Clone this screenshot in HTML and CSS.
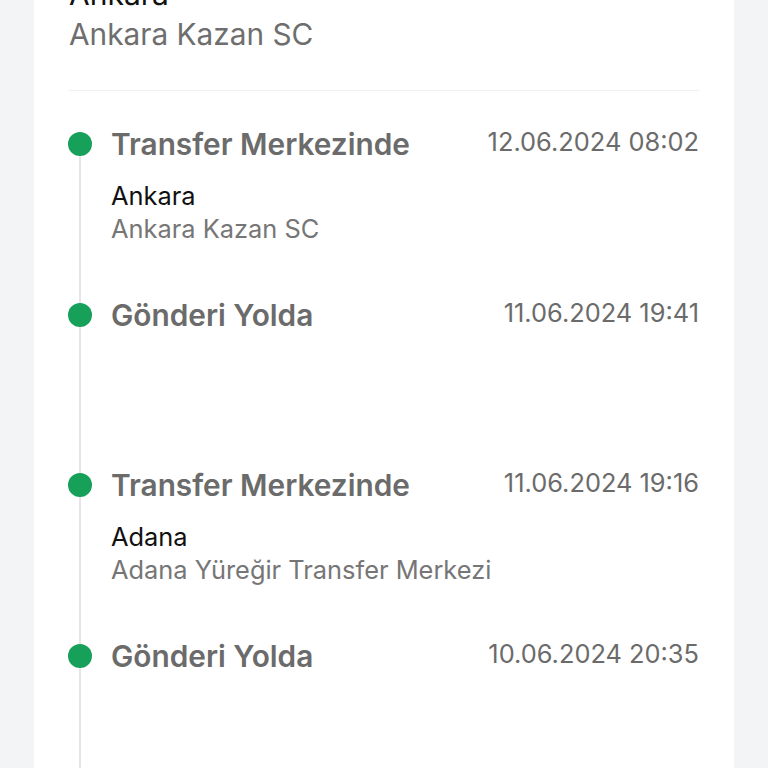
FILE: index.html
```html
<!DOCTYPE html>
<html lang="tr">

<head>
    <meta charset="UTF-8">
    <meta name="viewport" content="width=device-width, initial-scale=1.0">
    <title>Gönderi Takibi</title>
    <link rel="stylesheet" href="styles.css">
</head>

<body>

    <div class="card">
        <div class="location">
            <div class="city">Ankara</div>
            <div class="place">Ankara Kazan SC</div>
        </div>

        <div class="divider"></div>

        <ul class="timeline">
            <li class="step">
                <div class="stepHead">
                    <span class="stepTitle">Transfer Merkezinde</span>
                    <span class="stepDate">12.06.2024 08:02</span>
                </div>
                <div class="stepDetails">
                    <div class="city">Ankara</div>
                    <div class="place">Ankara Kazan SC</div>
                </div>
            </li>
            <li class="step">
                <div class="stepHead">
                    <span class="stepTitle">Gönderi Yolda</span>
                    <span class="stepDate">11.06.2024 19:41</span>
                </div>
                <div class="stepDetails"></div>
            </li>
            <li class="step">
                <div class="stepHead">
                    <span class="stepTitle">Transfer Merkezinde</span>
                    <span class="stepDate">11.06.2024 19:16</span>
                </div>
                <div class="stepDetails">
                    <div class="city">Adana</div>
                    <div class="place">Adana Yüreğir Transfer Merkezi</div>
                </div>
            </li>
            <li class="step">
                <div class="stepHead">
                    <span class="stepTitle">Gönderi Yolda</span>
                    <span class="stepDate">10.06.2024 20:35</span>
                </div>
                <div class="stepDetails"></div>
            </li>
        </ul>
    </div>

</body>

</html>
```

FILE: styles.css
```css
* {
    box-sizing: border-box;
}

body {
    margin: 0;
    background-color: #f3f4f6;
    font-family: Inter, "Noto Sans", Arial, sans-serif;
}

.card {
    margin: -58px 34px 0;
    padding: 32px 35px 40px;
    background-color: #ffffff;
    border-radius: 12px;
}

.location .city {
    font-size: 30px;
    line-height: 40px;
    color: #111111;
}

.location .place {
    font-size: 29.8px;
    line-height: 40px;
    color: #6e6e6e;
}

.divider {
    height: 1px;
    margin-top: 36px;
    background-color: #f0f0f0;
}

.timeline {
    list-style: none;
    margin: 41px 0 0 10px;
    padding: 0;
    border-left: 2px solid #e5e5e5;
}

.step {
    position: relative;
    padding: 0 0 57.7px 30px;
}

.step::before {
    content: "";
    position: absolute;
    left: -13px;
    top: 0;
    width: 24px;
    height: 24px;
    border-radius: 50%;
    background-color: #16a05a;
}

.stepHead {
    display: flex;
    justify-content: space-between;
    align-items: flex-start;
}

.stepTitle {
    font-size: 29.8px;
    line-height: 24px;
    font-weight: 600;
    color: #6b6b6b;
}

.stepDate {
    font-size: 25.4px;
    line-height: 20px;
    color: #6b6b6b;
}

.stepDetails {
    min-height: 66px;
    margin-top: 23px;
}

.stepDetails .city {
    font-size: 25.4px;
    line-height: 33px;
    color: #111111;
}

.stepDetails .place {
    font-size: 25.4px;
    line-height: 33px;
    color: #767676;
}
```
